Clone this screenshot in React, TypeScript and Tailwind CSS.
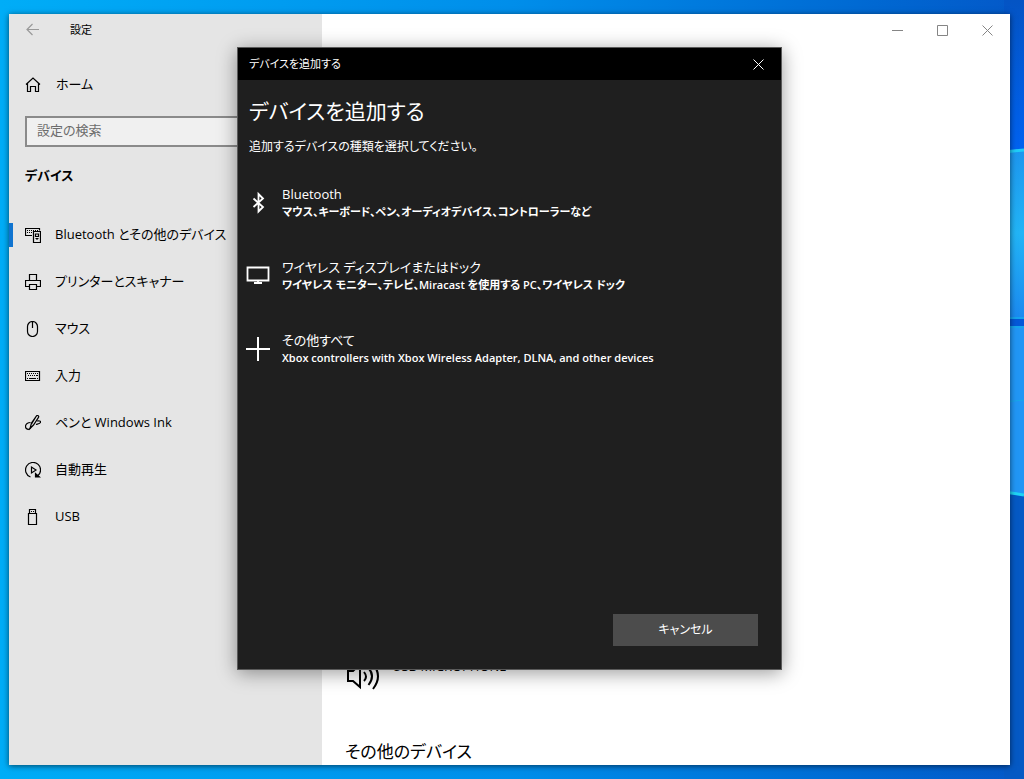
import React from 'react';

interface NavItem {
  label: string;
  icon: React.ReactNode;
  active?: boolean;
}

interface DeviceOption {
  title: string;
  description: string;
  icon: React.ReactNode;
}

interface IconProps {
  className?: string;
  children: React.ReactNode;
}

const Icon: React.FC<IconProps> = ({ className = 'w-4 h-4', children }) => (
  <svg viewBox="0 0 16 16" fill="none" stroke="currentColor" strokeWidth="1.2" className={className} aria-hidden="true">
    {children}
  </svg>
);

const navItems: NavItem[] = [
  {
    label: 'Bluetooth とその他のデバイス',
    active: true,
    icon: (
      <Icon>
        <path d="M7 8.5H.5v-7h14v2M8.5 4.5h7v11h-7zM10.5 7h3v2.5h-3zM11.5 12.5h1" />
        <path d="M2 3.5h1M4 3.5h1M6 3.5h1M8 3.5h1M10 3.5h1M12 3.5h1M2 5.5h1M4 5.5h1M6 5.5h1M10.5 11.5h3" />
      </Icon>
    ),
  },
  {
    label: 'プリンターとスキャナー',
    icon: (
      <Icon>
        <path d="M4.5 6V.5h7V6M4.5 12.5h-4v-6h15v6h-4M4.5 10.5h7v5h-7z" />
      </Icon>
    ),
  },
  {
    label: 'マウス',
    icon: (
      <Icon>
        <path d="M7.5.5a5 5 0 0 0-5 5v5a5 5 0 0 0 10 0v-5a5 5 0 0 0-5-5M7.5 1v6" />
      </Icon>
    ),
  },
  {
    label: '入力',
    icon: (
      <Icon>
        <path d="M.5 3.5h14v9H.5z" />
        <path d="M2 5.5h1M4 5.5h1M6 5.5h1M8 5.5h1M10 5.5h1M12 5.5h1M3 7.5h1M5 7.5h1M7 7.5h1M9 7.5h1M11 7.5h2M2 10.5h1M4 10.5h7M12 10.5h1" />
      </Icon>
    ),
  },
  {
    label: 'ペンと Windows Ink',
    icon: (
      <Icon>
        <path d="M5 13.5L6.5 8 11.5.8c1-1 2.8.3 2 1.500L8.5 10zM5 13.5L8.5 10M10.5 2.5l-4 6.5" />
        <path d="M5.5 7.5C3 7.5.5 9 .5 11.5S4 15.5 5.5 13M12 6c2-.5 4 0 3.5 1.500S12.500 9 11 9.500" />
      </Icon>
    ),
  },
  {
    label: '自動再生',
    icon: (
      <Icon>
        <path d="M5.5 15A7.5 7.5 0 1 1 12.5 14M6.5 5v6l4.5-3z" />
        <path d="M10.5 11.5v3.500h4z" fill="currentColor" />
      </Icon>
    ),
  },
  {
    label: 'USB',
    icon: (
      <Icon>
        <path d="M4.5 4.5v-4h6v4M3.5 4.5h8v11h-8zM6 2.5h1M8 2.5h1" />
      </Icon>
    ),
  },
];

const options: DeviceOption[] = [
  {
    title: 'Bluetooth',
    description: 'マウス、キーボード、ペン、オーディオデバイス、コントローラーなど',
    icon: (
      <svg viewBox="0 0 24 24" fill="none" stroke="currentColor" strokeWidth="1.8" className="w-6 h-6" aria-hidden="true">
        <path d="M7.500 7.500l9.500 8.500-4.500 4.500V3l4.500 4.500-9.500 8.500" />
      </svg>
    ),
  },
  {
    title: 'ワイヤレス ディスプレイまたはドック',
    description: 'ワイヤレス モニター、テレビ、Miracast を使用する PC、ワイヤレス ドック',
    icon: (
      <svg viewBox="0 0 24 24" fill="none" stroke="currentColor" strokeWidth="1.8" className="w-6 h-6" aria-hidden="true">
        <path d="M1.5 3.5h21v13h-21zM12 16.5v3M8 19h8" />
      </svg>
    ),
  },
  {
    title: 'その他すべて',
    description: 'Xbox controllers with Xbox Wireless Adapter, DLNA, and other devices',
    icon: (
      <svg viewBox="0 0 24 24" fill="none" stroke="currentColor" strokeWidth="2" className="w-6 h-6" aria-hidden="true">
        <path d="M12 0v24M0 12h24" />
      </svg>
    ),
  },
];

const Wallpaper: React.FC = () => (
  <div className="absolute inset-0 bg-linear-to-r from-[#00adf7] via-[#008eea] to-[#0458c8]">
    <svg viewBox="0 0 20 779" preserveAspectRatio="none" className="absolute right-0 top-0 h-full w-5" aria-hidden="true">
      <defs>
        <linearGradient id="sky" x1="0" y1="0" x2="0" y2="1">
          <stop offset="0" stopColor="#0454c4" />
          <stop offset="1" stopColor="#0062f0" />
        </linearGradient>
        <linearGradient id="pane" x1="0" y1="0" x2="0" y2="1">
          <stop offset="0" stopColor="#1d96ee" />
          <stop offset="0.5" stopColor="#22b4f6" />
          <stop offset="1" stopColor="#1b8af0" />
        </linearGradient>
      </defs>
      <path d="M0 0h20v150H0z" fill="url(#sky)" />
      <path d="M0 151l20-2v168H0z" fill="url(#pane)" />
      <path d="M0 326h20v168l-20-2z" fill="#2196f5" />
      <path d="M0 319h20v7H0z" fill="#0458d8" />
      <path d="M0 152l20-2" stroke="#20cdf8" strokeWidth="3" />
      <path d="M0 318h20M0 327h20" stroke="#15a4ee" strokeWidth="2" />
      <path d="M0 402l20-2" stroke="#18a8e8" strokeWidth="1" />
      <path d="M0 494l20 3v282H0z" fill="#0559c4" />
      <path d="M0 492l20 3" stroke="#20d4f4" strokeWidth="3" />
    </svg>
  </div>
);

const Sidebar: React.FC = () => (
  <aside className="w-[313px] shrink-0 bg-[#e5e5e5]">
    <div className="flex h-8 items-center gap-[29px] pl-4 text-[11px]">
      <button type="button" aria-label="戻る" className="text-[#999]">
        <Icon>
          <path d="M14 7.5H2M7.5 2L2 7.5 7.5 13" />
        </Icon>
      </button>
      <span>設定</span>
    </div>
    <a href="#home" className="mt-[15px] flex h-[47px] items-center gap-[15px] pl-4 text-[13px]">
      <Icon>
        <path d="M1 7.5L8 1l7 6.500M2.500 6.500v8h3v-5h5v5h3v-8" />
      </Icon>
      ホーム
    </a>
    <div className="mt-2 pl-4 pr-4">
      <input
        type="text"
        aria-label="設定の検索"
        placeholder="設定の検索"
        className="block h-[31px] w-full border-2 border-[#8a8a8a] bg-[#f0f0f0] px-2.5 pb-1 text-[13px] placeholder:text-[#6c6c6c] outline-none"
      />
    </div>
    <h2 className="mt-4 pl-4 text-[13px] leading-6 font-bold">デバイス</h2>
    <nav className="mt-6">
      {navItems.map((item) => (
        <a
          key={item.label}
          href="#"
          aria-current={item.active ? 'page' : undefined}
          className="flex h-[47px] items-center text-[13px]"
        >
          <span className={`mr-3 h-6 w-1 ${item.active ? 'bg-[#1074d0]' : ''}`} />
          {item.icon}
          <span className="ml-3.5">{item.label}</span>
        </a>
      ))}
    </nav>
  </aside>
);

const WindowControls: React.FC = () => (
  <div className="flex h-8 justify-end text-[#858585]">
    <button type="button" aria-label="最小化" className="flex w-[45px] items-center justify-center">
      <svg viewBox="0 0 11 11" fill="none" stroke="currentColor" className="h-[11px] w-[11px]">
        <path d="M0 5.5h11" />
      </svg>
    </button>
    <button type="button" aria-label="最大化" className="flex w-[45px] items-center justify-center">
      <svg viewBox="0 0 11 11" fill="none" stroke="currentColor" className="h-[11px] w-[11px]">
        <path d="M.5.5h10v10H.5z" />
      </svg>
    </button>
    <button type="button" aria-label="閉じる" className="flex w-[45px] items-center justify-center">
      <svg viewBox="0 0 11 11" fill="none" stroke="currentColor" className="h-[11px] w-[11px]">
        <path d="M.5.5l10 10M10.5.5l-10 10" />
      </svg>
    </button>
  </div>
);

const AddDeviceDialog: React.FC = () => (
  <div
    role="dialog"
    aria-labelledby="dialog-heading"
    className="flex w-[545px] flex-col border border-[#5a5a5a] bg-[#1f1f1f] text-white shadow-[0_3px_18px_rgba(0,0,0,0.4)]"
  >
    <div className="flex h-8 shrink-0 items-center justify-between bg-black pl-[11px] text-[11px]">
      <span>デバイスを追加する</span>
      <button type="button" aria-label="閉じる" className="flex h-8 w-[45px] items-center justify-center">
        <svg viewBox="0 0 11 11" fill="none" stroke="currentColor" className="h-[11px] w-[11px]">
          <path d="M.5.5l10 10M10.5.5l-10 10" />
        </svg>
      </button>
    </div>
    <h1 id="dialog-heading" className="mt-[15px] pl-[11px] text-[21px] leading-8">
      デバイスを追加する
    </h1>
    <p className="mt-2 pl-[11px] text-xs leading-6">追加するデバイスの種類を選択してください。</p>
    <div className="mt-[7px] flex flex-col">
      {options.map((option) => (
        <button key={option.title} type="button" className="flex h-[73px] items-center gap-3 pl-2 text-left">
          {option.icon}
          <span className="flex flex-col">
            <span className="text-[13px] leading-[18px]">{option.title}</span>
            <span className="text-[11px] leading-[18px] font-semibold">{option.description}</span>
          </span>
        </button>
      ))}
    </div>
    <button type="button" className="mt-auto mr-[23px] mb-[23px] h-8 w-[145px] self-end bg-[#4c4c4c] text-xs">
      キャンセル
    </button>
  </div>
);

const App: React.FC = () => {
  return (
    <div className="relative flex h-screen pt-3.5 pr-3.5 pb-3.5 pl-[9px] font-['Open_Sans','Noto_Sans_CJK_JP',sans-serif] text-black [font-feature-settings:'palt']">
      <Wallpaper />
      <div className="relative flex flex-1 overflow-hidden bg-white shadow-[0_1px_6px_rgba(0,0,0,0.6)]">
        <Sidebar />
        <main className="flex flex-1 flex-col">
          <WindowControls />
          <div className="mt-auto pl-[23px]">
            <div className="flex gap-[11px]">
              <svg viewBox="0 0 36 36" fill="none" stroke="currentColor" strokeWidth="2" className="h-9 w-9" aria-hidden="true">
                <path d="M3 13h5l7-7v23l-7-6H3z" />
                <path d="M19 14q4 5 0 9M23.500 10q7 8 0 17M28 6q10 12 0 25" />
              </svg>
              <span className="text-[13px] leading-4">USB MICROPHONE</span>
            </div>
            <h2 className="mt-[46px] pb-px text-[17px] leading-6">その他のデバイス</h2>
          </div>
        </main>
        <div className="absolute inset-0 flex justify-center pt-[33px] pb-[95px]">
          <AddDeviceDialog />
        </div>
      </div>
    </div>
  );
};

export default App;
